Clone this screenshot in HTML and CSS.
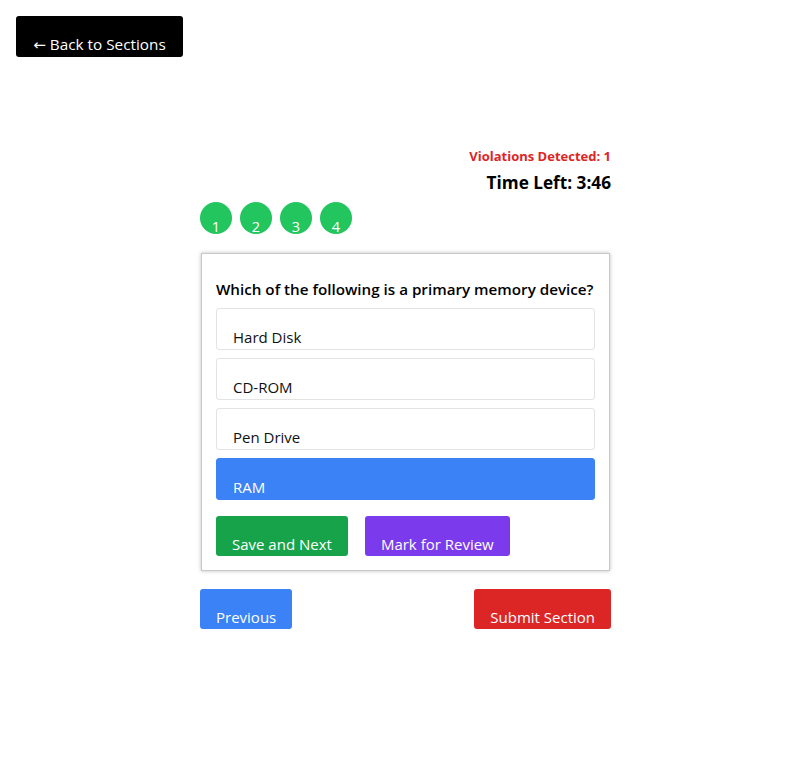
FILE: index.html
```html
<!DOCTYPE html>
<html>
<head>
<meta charset="utf-8">
<link rel="stylesheet" href="styles.css">
</head>
<body>
<button class="back-btn"><span class="arrow">←</span> Back to Sections</button>
<main class="exam">
  <div class="violations">Violations Detected: 1</div>
  <div class="timer">Time Left: 3:46</div>
  <div class="palette">
    <span class="qnum">1</span>
    <span class="qnum">2</span>
    <span class="qnum">3</span>
    <span class="qnum">4</span>
  </div>
  <section class="card">
    <h3 class="question">Which of the following is a primary memory device?</h3>
    <div class="options">
      <div class="option">Hard Disk</div>
      <div class="option">CD-ROM</div>
      <div class="option">Pen Drive</div>
      <div class="option selected">RAM</div>
    </div>
    <div class="actions">
      <button class="btn green">Save and Next</button>
      <button class="btn purple">Mark for Review</button>
    </div>
  </section>
  <div class="nav">
    <button class="btn blue">Previous</button>
    <button class="btn red">Submit Section</button>
  </div>
</main>
</body>
</html>
```
FILE: styles.css
```css
body {
  margin: 0;
  padding: 16px;
  font-family: "Open Sans", "Noto Sans", sans-serif;
  color: #000;
  background: #fff;
}
button {
  font-family: inherit;
  border: none;
  cursor: pointer;
}
.back-btn {
  display: block;
  width: 167px;
  height: 41px;
  background: #000;
  color: #fff;
  font-size: 15.3px;
  border-radius: 3px;
  padding: 14px 0 0;
}
.arrow {
  font-family: "DejaVu Sans", sans-serif;
  font-size: 15px;
}
.exam {
  width: 411px;
  margin: 90px auto 0;
  display: flex;
  flex-direction: column;
}
.violations {
  text-align: right;
  color: #dc2626;
  font-weight: 700;
  font-size: 13px;
  line-height: 18px;
}
.timer {
  text-align: right;
  font-weight: 700;
  font-size: 17.2px;
  line-height: 22px;
  margin-top: 7px;
}
.palette {
  display: flex;
  gap: 8px;
  margin-top: 8px;
}
.qnum {
  width: 32px;
  height: 32px;
  border-radius: 50%;
  background: #22c55e;
  color: #fff;
  font-size: 14.5px;
  display: flex;
  justify-content: center;
  align-items: flex-end;
  line-height: 14px;
  box-sizing: border-box;
}
.card {
  margin-top: 19px;
  margin-left: 1px;
  width: 409px;
  box-sizing: border-box;
  border: 1px solid #c8c8c8;
  box-shadow: 0 0 4px rgba(0,0,0,0.25);
  padding: 24px 14px 14px;
}
.question {
  margin: 0 0 8px;
  font-size: 15.2px;
  font-weight: 600;
  line-height: 22px;
  white-space: nowrap;
}
.options {
  display: flex;
  flex-direction: column;
  gap: 8px;
}
.option {
  height: 42px;
  box-sizing: border-box;
  border: 1px solid #e3e3e3;
  border-radius: 3px;
  padding: 18px 16px 0;
  font-size: 15px;
  line-height: 20px;
  color: #111;
}
.option.selected {
  background: #3b82f6;
  border-color: #3b82f6;
  color: #fff;
}
.actions {
  display: flex;
  gap: 17px;
  margin-top: 16px;
}
.btn {
  height: 40px;
  color: #fff;
  font-size: 15px;
  border-radius: 3px;
  padding: 15px 16px 0;
  line-height: 20px;
}
.green { background: #16a34a; }
.purple { background: #7c3aed; }
.blue { background: #3b82f6; }
.red { background: #dc2626; }
.nav {
  display: flex;
  justify-content: space-between;
  margin-top: 18px;
}
```
